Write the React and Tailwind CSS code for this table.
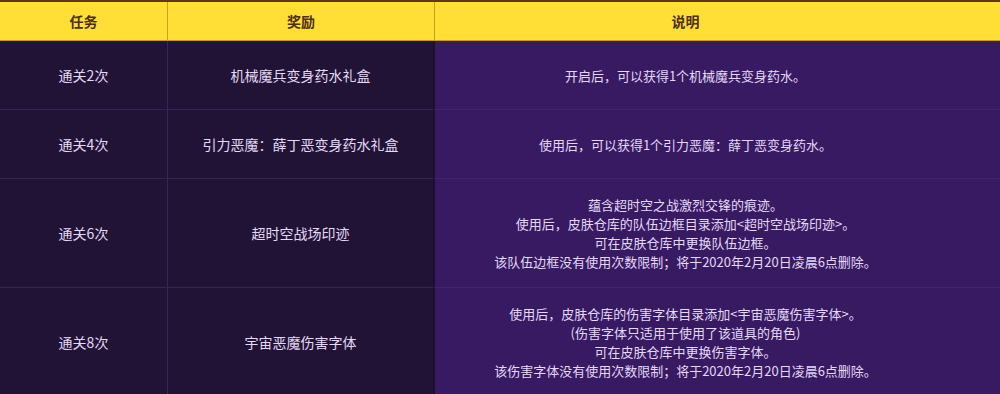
import React from 'react';

const rows = [
  { task: '通关2次', reward: '机械魔兵变身药水礼盒', desc: ['开启后，可以获得1个机械魔兵变身药水。'], h: 'h-[69px]' },
  { task: '通关4次', reward: '引力恶魔：薛丁恶变身药水礼盒', desc: ['使用后，可以获得1个引力恶魔：薛丁恶变身药水。'], h: 'h-[69px]' },
  {
    task: '通关6次',
    reward: '超时空战场印迹',
    desc: [
      '蕴含超时空之战激烈交锋的痕迹。',
      '使用后，皮肤仓库的队伍边框目录添加<超时空战场印迹>。',
      '可在皮肤仓库中更换队伍边框。',
      '该队伍边框没有使用次数限制；将于2020年2月20日凌晨6点删除。',
    ],
    h: 'h-[109px]',
  },
  {
    task: '通关8次',
    reward: '宇宙恶魔伤害字体',
    desc: [
      '使用后，皮肤仓库的伤害字体目录添加<宇宙恶魔伤害字体>。',
      '(伤害字体只适用于使用了该道具的角色)',
      '可在皮肤仓库中更换伤害字体。',
      '该伤害字体没有使用次数限制；将于2020年2月20日凌晨6点删除。',
    ],
    h: 'h-[109px]',
  },
];

export default function App() {
  return (
    <div
      className="w-[1000px] h-[394px] overflow-hidden bg-[#211335]"
      style={{ fontFamily: '"Microsoft YaHei", "Noto Sans CJK SC", "Noto Sans", sans-serif' }}
    >
      <div className="grid grid-cols-[168px_267px_565px] border-t-2 border-[#5e3619] bg-[#ffdf36] border-b border-b-[#c99a1c]">
        <div className="h-[38px] flex items-center justify-center text-[14px] font-bold text-[#4d300a] border-r border-[#c9a024]">任务</div>
        <div className="h-[38px] flex items-center justify-center text-[14px] font-bold text-[#4d300a] border-r border-[#c9a024]">奖励</div>
        <div className="h-[38px] flex items-center justify-center pr-[64px] text-[14px] font-bold text-[#4d300a]">说明</div>
      </div>
      {rows.map((r, i) => (
        <div key={i} className={`grid grid-cols-[168px_267px_565px] ${r.h}`}>
          <div className="flex items-center justify-center text-[14px] text-[#e4d9f6] bg-[#211335] border-r border-[#36265a] border-b border-b-[#35245a]">
            {r.task}
          </div>
          <div className="flex items-center justify-center text-[14px] text-[#e4d9f6] bg-[#211335] border-r-2 border-[#1b0f2d] border-b border-b-[#35245a]">
            {r.reward}
          </div>
          <div className="flex flex-col items-center justify-center pr-[64px] text-[13px] leading-[19px] text-[#e4d9f6] bg-[#371a62] border-b border-b-[#40266c]">
            {r.desc.map((d, j) => (
              <div key={j}>{d}</div>
            ))}
          </div>
        </div>
      ))}
    </div>
  );
}
